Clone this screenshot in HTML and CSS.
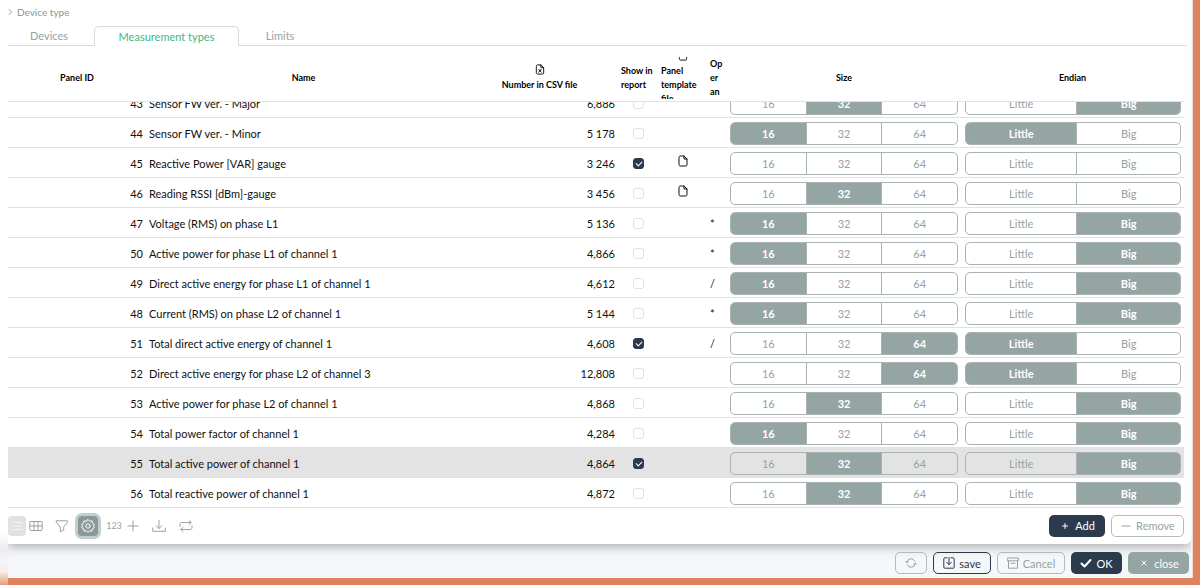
FILE: index.html
```
<!DOCTYPE html>
<html lang="en">
<head>
<meta charset="utf-8">
<title>Device type</title>
<link rel="stylesheet" href="styles.css">
</head>
<body>
<svg class="defs" aria-hidden="true">
  <symbol id="i-file" viewBox="0 0 10 12"><path d="M1 2.2C1 1.5 1.5 1 2.2 1H6l3 3v5.800c0 .7-.5 1.200-1.200 1.200H2.200C1.500 11 1 10.500 1 9.800zM6 1v3h3"/></symbol>
</svg>
<div class="edge"></div>
<div class="window">
  <main class="panel">
    <nav class="crumb"><svg class="chev" viewBox="0 0 6 8"><path d="M1 1l3.500 3L1 7"/></svg><span>Device type</span></nav>
    <div class="tabs" role="tablist">
      <button class="tab tab-first" role="tab">Devices</button>
      <button class="tab tab-active" role="tab" aria-selected="true">Measurement types</button>
      <button class="tab" role="tab">Limits</button>
      <span class="tabs-rest"></span>
    </div>

    <table class="grid grid-head">
      <colgroup><col class="c-id"><col><col class="c-csv"><col class="c-show"><col class="c-file"><col class="c-op"><col class="c-size"><col class="c-end"></colgroup>
      <thead>
        <tr>
          <th>Panel ID</th>
          <th>Name</th>
          <th><svg class="head-file" viewBox="0 0 10 12"><path d="M1 2.200C1 1.500 1.500 1 2.200 1H6l3 3v5.800c0 .7-.5 1.200-1.200 1.200H2.200C1.500 11 1 10.500 1 9.800zM6 1v3h3M3.700 5.800l2.600 3.200M6.300 5.800L3.700 9"/></svg>Number in CSV file</th>
          <th class="left">Show in report</th>
          <th class="left"><div class="clip"><div><svg class="head-file" viewBox="0 0 10 12"><use href="#i-file"/></svg>Panel template file</div></div></th>
          <th class="left">Op er an</th>
          <th>Size</th>
          <th>Endian</th>
        </tr>
      </thead>
    </table>

    <div class="rows">
      <table class="grid grid-body">
        <colgroup><col class="c-id"><col><col class="c-csv"><col class="c-show"><col class="c-file"><col class="c-op"><col class="c-size"><col class="c-end"></colgroup>
        <tbody>
          <tr><td class="num">43</td><td>Sensor FW ver. - Major</td><td class="num">6,886</td><td class="ctl"><input type="checkbox" aria-label="Show 43 in report"></td><td class="ctl"></td><td class="op"></td>
            <td class="ctl"><div class="seg"><button>16</button><button class="on">32</button><button>64</button></div></td><td class="ctl"><div class="seg seg-end"><button>Little</button><button class="on">Big</button></div></td></tr>
          <tr><td class="num">44</td><td>Sensor FW ver. - Minor</td><td class="num">5 178</td><td class="ctl"><input type="checkbox" aria-label="Show 44 in report"></td><td class="ctl"></td><td class="op"></td>
            <td class="ctl"><div class="seg"><button class="on">16</button><button>32</button><button>64</button></div></td><td class="ctl"><div class="seg seg-end"><button class="on">Little</button><button>Big</button></div></td></tr>
          <tr><td class="num">45</td><td>Reactive Power [VAR] gauge</td><td class="num">3 246</td><td class="ctl"><input type="checkbox" checked aria-label="Show 45 in report"></td><td class="ctl"><svg class="file"><use href="#i-file"/></svg></td><td class="op"></td>
            <td class="ctl"><div class="seg"><button>16</button><button>32</button><button>64</button></div></td><td class="ctl"><div class="seg seg-end"><button>Little</button><button>Big</button></div></td></tr>
          <tr><td class="num">46</td><td>Reading RSSI [dBm]-gauge</td><td class="num">3 456</td><td class="ctl"><input type="checkbox" aria-label="Show 46 in report"></td><td class="ctl"><svg class="file"><use href="#i-file"/></svg></td><td class="op"></td>
            <td class="ctl"><div class="seg"><button>16</button><button class="on">32</button><button>64</button></div></td><td class="ctl"><div class="seg seg-end"><button>Little</button><button>Big</button></div></td></tr>
          <tr><td class="num">47</td><td>Voltage (RMS) on phase L1</td><td class="num">5 136</td><td class="ctl"><input type="checkbox" aria-label="Show 47 in report"></td><td class="ctl"></td><td class="op">*</td>
            <td class="ctl"><div class="seg"><button class="on">16</button><button>32</button><button>64</button></div></td><td class="ctl"><div class="seg seg-end"><button>Little</button><button class="on">Big</button></div></td></tr>
          <tr><td class="num">50</td><td>Active power for phase L1 of channel 1</td><td class="num">4,866</td><td class="ctl"><input type="checkbox" aria-label="Show 50 in report"></td><td class="ctl"></td><td class="op">*</td>
            <td class="ctl"><div class="seg"><button class="on">16</button><button>32</button><button>64</button></div></td><td class="ctl"><div class="seg seg-end"><button>Little</button><button class="on">Big</button></div></td></tr>
          <tr><td class="num">49</td><td>Direct active energy for phase L1 of channel 1</td><td class="num">4,612</td><td class="ctl"><input type="checkbox" aria-label="Show 49 in report"></td><td class="ctl"></td><td class="op">/</td>
            <td class="ctl"><div class="seg"><button class="on">16</button><button>32</button><button>64</button></div></td><td class="ctl"><div class="seg seg-end"><button>Little</button><button class="on">Big</button></div></td></tr>
          <tr><td class="num">48</td><td>Current (RMS) on phase L2 of channel 1</td><td class="num">5 144</td><td class="ctl"><input type="checkbox" aria-label="Show 48 in report"></td><td class="ctl"></td><td class="op">*</td>
            <td class="ctl"><div class="seg"><button class="on">16</button><button>32</button><button>64</button></div></td><td class="ctl"><div class="seg seg-end"><button>Little</button><button class="on">Big</button></div></td></tr>
          <tr><td class="num">51</td><td>Total direct active energy of channel 1</td><td class="num">4,608</td><td class="ctl"><input type="checkbox" checked aria-label="Show 51 in report"></td><td class="ctl"></td><td class="op">/</td>
            <td class="ctl"><div class="seg"><button>16</button><button>32</button><button class="on">64</button></div></td><td class="ctl"><div class="seg seg-end"><button class="on">Little</button><button>Big</button></div></td></tr>
          <tr><td class="num">52</td><td>Direct active energy for phase L2 of channel 3</td><td class="num">12,808</td><td class="ctl"><input type="checkbox" aria-label="Show 52 in report"></td><td class="ctl"></td><td class="op"></td>
            <td class="ctl"><div class="seg"><button>16</button><button>32</button><button class="on">64</button></div></td><td class="ctl"><div class="seg seg-end"><button class="on">Little</button><button>Big</button></div></td></tr>
          <tr><td class="num">53</td><td>Active power for phase L2 of channel 1</td><td class="num">4,868</td><td class="ctl"><input type="checkbox" aria-label="Show 53 in report"></td><td class="ctl"></td><td class="op"></td>
            <td class="ctl"><div class="seg"><button>16</button><button class="on">32</button><button>64</button></div></td><td class="ctl"><div class="seg seg-end"><button>Little</button><button class="on">Big</button></div></td></tr>
          <tr><td class="num">54</td><td>Total power factor of channel 1</td><td class="num">4,284</td><td class="ctl"><input type="checkbox" aria-label="Show 54 in report"></td><td class="ctl"></td><td class="op"></td>
            <td class="ctl"><div class="seg"><button class="on">16</button><button>32</button><button>64</button></div></td><td class="ctl"><div class="seg seg-end"><button>Little</button><button class="on">Big</button></div></td></tr>
          <tr class="selected"><td class="num">55</td><td>Total active power of channel 1</td><td class="num">4,864</td><td class="ctl"><input type="checkbox" checked aria-label="Show 55 in report"></td><td class="ctl"></td><td class="op"></td>
            <td class="ctl"><div class="seg"><button>16</button><button class="on">32</button><button>64</button></div></td><td class="ctl"><div class="seg seg-end"><button>Little</button><button class="on">Big</button></div></td></tr>
          <tr><td class="num">56</td><td>Total reactive power of channel 1</td><td class="num">4,872</td><td class="ctl"><input type="checkbox" aria-label="Show 56 in report"></td><td class="ctl"></td><td class="op"></td>
            <td class="ctl"><div class="seg"><button>16</button><button class="on">32</button><button>64</button></div></td><td class="ctl"><div class="seg seg-end"><button>Little</button><button class="on">Big</button></div></td></tr>
        </tbody>
      </table>
    </div>

    <div class="toolbar">
      <div class="tools">
        <button class="tool tool-list" aria-label="List view"><svg viewBox="0 0 14 14"><path d="M5 3.500h7M5 7h7M5 10.500h7M2 3.500h1M2 7h1M2 10.500h1"/></svg></button>
        <button class="tool tool-grid" aria-label="Grid view"><svg viewBox="0 0 14 14"><rect x=".8" y="2.500" width="12.400" height="9" rx="1"/><path d="M.8 7h12.400M5 2.500v9M9 2.500v9"/></svg></button>
        <button class="tool tool-filter" aria-label="Filter"><svg viewBox="0 0 14 14"><path d="M1.500 1.800h11v1.500L8.700 8v3L5.300 12.800V8L1.500 3.300z"/></svg></button>
        <button class="tool tool-gear" aria-label="Settings"><svg viewBox="0 0 14 14"><path d="M7 .6l1.700 1.600 2.300-.3.400 2.300 2 1.200L12.400 7l1 1.700-2 1.200-.4 2.200-2.300-.3L7 13.400l-1.700-1.600-2.300.3-.4-2.200-2-1.200L1.600 7l-1-1.600 2-1.200.4-2.300 2.300.3z"/><circle cx="7" cy="7" r="2.200"/></svg></button>
        <button class="tool tool-num">123</button>
        <button class="tool tool-plus" aria-label="Add column"><svg viewBox="0 0 14 14"><path d="M7 2v10M2 7h10"/></svg></button>
        <button class="tool tool-down" aria-label="Download"><svg viewBox="0 0 14 14"><path d="M.7 9v3.300h12.600V9M7 1.500v7.800M4.200 6.700L7 9.500l2.800-2.800"/></svg></button>
        <button class="tool tool-loop" aria-label="Repeat"><svg viewBox="0 0 14 14"><path d="M1 7.500V5.500C1 4.200 1.700 3.500 3 3.500h9M10 1.500l2.200 2L10 5.500M13 6.500v2c0 1.300-.7 2-2 2H2M4 8.500l-2.200 2 2.200 2"/></svg></button>
      </div>
      <button class="btn dark btn-add"><svg viewBox="0 0 12 12"><path d="M6 3.500v5M3.500 6h5"/></svg>Add</button>
      <button class="btn muted btn-remove"><svg viewBox="0 0 12 12"><path d="M2 6h8"/></svg>Remove</button>
    </div>
  </main>

  <footer class="actions">
    <button class="btn muted btn-refresh" aria-label="Refresh"><svg viewBox="0 0 12 12"><path d="M1.800 5.500a4.200 4.200 0 0 1 8-1.300M10.200 6.500a4.200 4.200 0 0 1-8 1.300M.5 4.500l1.300 1.300 1.500-1.200M8.800 7.300l1.500-1.100 1.300 1.200"/></svg></button>
    <button class="btn outline btn-save"><svg viewBox="0 0 12 12"><path d="M4 .8H1.800c-.6 0-1 .4-1 1v8.400c0 .6.400 1 1 1h8.400c.6 0 1-.4 1-1V1.800c0-.6-.4-1-1-1H8M6 .5v7M3.700 5.300L6 7.600l2.300-2.300"/></svg>save</button>
    <button class="btn muted btn-cancel"><svg viewBox="0 0 12 12"><path d="M.6 1h10.800v2.800H.6zM1.500 3.800v7.400h9V3.800M4 6.200h4"/></svg>Cancel</button>
    <button class="btn dark btn-ok"><svg class="bold" viewBox="0 0 12 12"><path d="M1.500 6.500l3 3L10.500 3"/></svg>OK</button>
    <button class="btn grey btn-close"><svg viewBox="0 0 12 12"><path d="M4 4l4 4M8 4l-4 4"/></svg>close</button>
  </footer>
</div>
</body>
</html>
```

FILE: styles.css
```
* { box-sizing: border-box; }

body {
  margin: 0;
  min-height: 100vh;
  display: flex;
  padding: 0 7px 7px 0;
  background: #de835e;
  font-family: Lato, "Liberation Sans", sans-serif;
  font-size: 11px;
  line-height: 14px;
  color: #111;
}

button {
  margin: 0;
  padding: 0;
  border: 0;
  background: none;
  font: inherit;
  color: inherit;
}

svg {
  fill: none;
  stroke: currentColor;
  stroke-width: 1;
  stroke-linecap: round;
  stroke-linejoin: round;
}

.defs { display: none; }

.edge {
  flex: none;
  width: 8px;
  margin-bottom: -7px;
  background: linear-gradient(#fff 0, #fff 532px, #ececee 550px, #f5f6f8 562px, #f9ece7 572px, #e59b7e 100%);
}

.window {
  flex: 1;
  min-width: 0;
  display: flex;
  flex-direction: column;
  background: #f5f7f9;
  border-right: 1px solid #e8dcd8;
}

.panel {
  flex: 1;
  display: flex;
  flex-direction: column;
  padding-right: 7px;
  margin-right: 1px;
  background: #fff;
  border-bottom-right-radius: 5px;
  box-shadow: 0 2px 12px rgba(0, 0, 0, .35);
  clip-path: inset(0 0 -34px 0);
}

.crumb {
  height: 26px;
  padding-bottom: 2px;
  display: flex;
  align-items: center;
  gap: 4px;
  font-size: 10px;
  color: #8b9595;
}
.chev { width: 5px; height: 8px; }

.tabs { display: flex; height: 20px; margin-right: -3px; }
.tab, .tabs-rest { border-bottom: 1px solid #d5dcdc; }
.tab { width: 82px; padding-top: 1px; color: #95a3a2; }
.tab-first { width: 86px; padding-right: 4px; }
.tab-active {
  width: 145px;
  padding: 0;
  line-height: 16px;
  color: #41b883;
  border: 1px solid #d5dcdc;
  border-bottom: 0;
  border-radius: 5px 5px 0 0;
}
.tabs-rest { flex: 1; }

.grid {
  width: 100%;
  table-layout: fixed;
  border-collapse: separate;
  border-spacing: 0;
}
.c-id { width: 138px; }
.c-csv { width: 157px; }
.c-show { width: 40px; }
.c-file { width: 50px; }
.c-op { width: 19px; }
.c-size { width: 234px; }
.c-end { width: 223px; }

.grid th {
  height: 56px;
  padding: 8px 3px 0;
  font-size: 9px;
  font-weight: 700;
  color: #000;
  border-bottom: 1px solid #dfe3e3;
}
.grid th.left { text-align: left; }
.grid th:nth-child(6) { padding: 8px 2px 0; }
.head-file {
  display: block;
  width: 10px;
  height: 11px;
  margin: 0 auto 3px;
}
.clip {
  height: 42px;
  display: flex;
  align-items: center;
  overflow: hidden;
}

.rows {
  flex: 1 1 0;
  min-height: 0;
  display: flex;
  flex-direction: column;
  justify-content: flex-end;
  overflow: hidden;
}
.grid td {
  height: 30px;
  padding: 3px 3px 0;
  border-bottom: 1px solid #dfe3e3;
  white-space: nowrap;
}
.grid td.num { text-align: right; }
.grid td.op { padding-left: 2px; }
.grid td.ctl { padding-top: 1px; }
.selected { background: #e3e3e3; }

.file { display: block; width: 10px; height: 12px; margin: 0 auto 4px; }

input[type="checkbox"] {
  appearance: none;
  display: block;
  width: 11px;
  height: 11px;
  margin: 0 auto;
  border: 1px solid #dfe3e5;
  border-radius: 3px;
  background: #fff;
}
input[type="checkbox"]:checked {
  border-color: #2b3a4d;
  background: #2b3a4d;
}
input[type="checkbox"]:checked::after {
  content: "";
  display: block;
  width: 5px;
  height: 3px;
  margin: 2px;
  border: solid #fff;
  border-width: 0 0 1px 1px;
  transform: rotate(-45deg);
}

.seg {
  display: flex;
  height: 23px;
  border: 1px solid #a9b3b2;
  border-radius: 5px;
  overflow: hidden;
  color: #95a3a2;
}
.seg-end { margin-left: 1px; }
.seg button { flex: 1 1 0; padding-top: 1px; }
.seg button + button { border-left: 1px solid #a9b3b2; }
.seg-end button:first-child { flex-grow: 14; }
.seg-end button:last-child { flex-grow: 13; }
.seg .on { background: #95a5a3; color: #fff; font-weight: 700; }

.toolbar {
  display: flex;
  align-items: center;
  height: 36px;
  padding-bottom: 1px;
  gap: 6px;
}
.tools {
  flex: 1;
  display: flex;
  align-items: center;
  color: #95a3a2;
}
.tool { display: flex; align-items: center; justify-content: center; width: 26px; height: 20px; }
.tool svg { width: 14px; height: 14px; }
.tool-list { width: 18px; border-radius: 4px; background: #e2e2e2; color: #f6f6f6; }
.tool-grid { width: 20px; }
.tool-filter { width: 32px; }
.tool-gear {
  width: 20px;
  border-radius: 4px;
  background: #8a9997;
  color: #fff;
  box-shadow: 0 0 0 3px #c3cecc;
}
.tool-num { font-size: 9px; width: 32px; }
.tool-plus { width: 6px; }
.tool-plus svg { flex: none; }
.tool-down { width: 46px; }
.tool-loop { width: 8px; }
.tool-loop svg { flex: none; }

.btn {
  display: flex;
  align-items: center;
  justify-content: center;
  gap: 4px;
  height: 22px;
  padding-top: 1px;
  border: 1px solid transparent;
  border-radius: 5px;
}
.btn svg { width: 12px; height: 12px; margin-bottom: 1px; }
.dark { background: #2b3a4d; color: #fff; }
.muted { border-color: #b3bcbb; color: #95a3a2; }
.outline { border-color: #2b3a4d; color: #2b3a4d; }
.grey { background: #95a5a3; color: #fff; }
.bold { stroke-width: 2; }
.btn-add { width: 56px; }
.btn-remove { width: 73px; }

.actions {
  display: flex;
  justify-content: flex-end;
  gap: 6px;
  padding: 8px 3px 4px;
  position: relative;
}
.btn-refresh { width: 32px; }
.btn-save { width: 58px; }
.btn-cancel { width: 68px; }
.btn-ok { width: 51px; }
.btn-close { width: 61px; }
```
